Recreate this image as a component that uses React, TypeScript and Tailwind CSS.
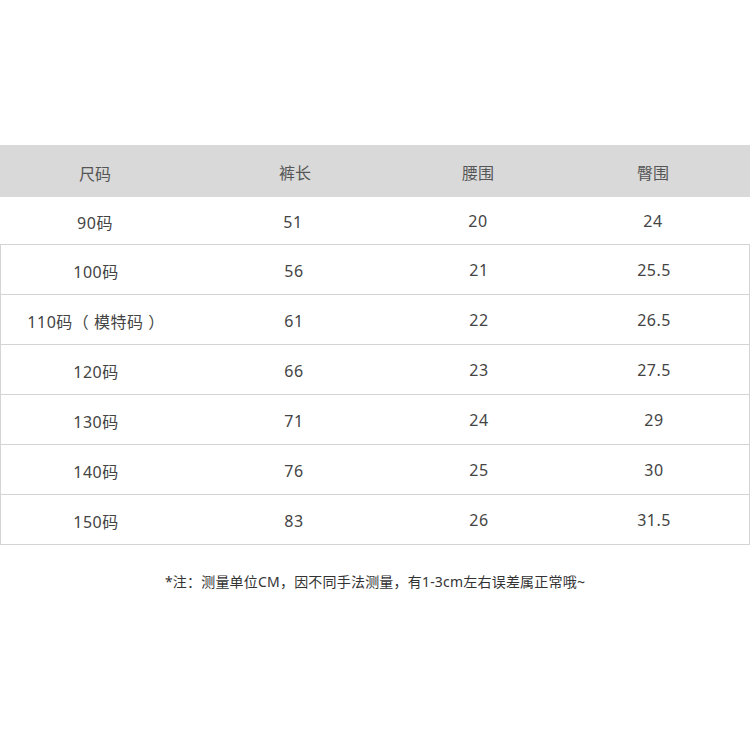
import React from 'react';

const rows: string[][] = [
  ['90码', '51', '20', '24'],
  ['100码', '56', '21', '25.5'],
  ['110码（ 模特码 ）', '61', '22', '26.5'],
  ['120码', '66', '23', '27.5'],
  ['130码', '71', '24', '29'],
  ['140码', '76', '25', '30'],
  ['150码', '83', '26', '31.5'],
];

const cols = 'grid grid-cols-[190px_210px_156px_194px]';

const App: React.FC = () => {
  return (
    <div
      className="w-[750px] h-[750px] bg-white text-[#444] pt-[145px]"
      style={{ fontFamily: '"Noto Sans", "Noto Sans CJK SC", sans-serif' }}
    >
      {/* Header */}
      <div className={`${cols} h-[52px] bg-[#d9d9d9] items-center text-[16px] text-[#555] pt-[3px]`}>
        <div className="text-center pt-[2px]">尺码</div>
        <div className="text-center">裤长</div>
        <div className="text-center">腰围</div>
        <div className="text-center">臀围</div>
      </div>

      {/* Body */}
      <div>
        {rows.map((r, i) => (
          <div
            key={i}
            className={`${cols} items-center text-[16px] tracking-[0.5px] border-b border-[#d4d4d4] ${
              i === 0 ? 'h-[48px]' : 'h-[50px] border-x'
            }`}
          >
            <div className="text-center pt-[4px]">{r[0]}</div>
            <div className="text-center pt-[3px] pr-[4px]">{r[1]}</div>
            <div className="text-center">{r[2]}</div>
            <div className="text-center">{r[3]}</div>
          </div>
        ))}
      </div>

      {/* Note */}
      <div className="text-center text-[14px] text-[#333] mt-[26px] tracking-[0.2px]">
        *注：测量单位CM，因不同手法测量，有1-3cm左右误差属正常哦~
      </div>
    </div>
  );
};

export default App;
